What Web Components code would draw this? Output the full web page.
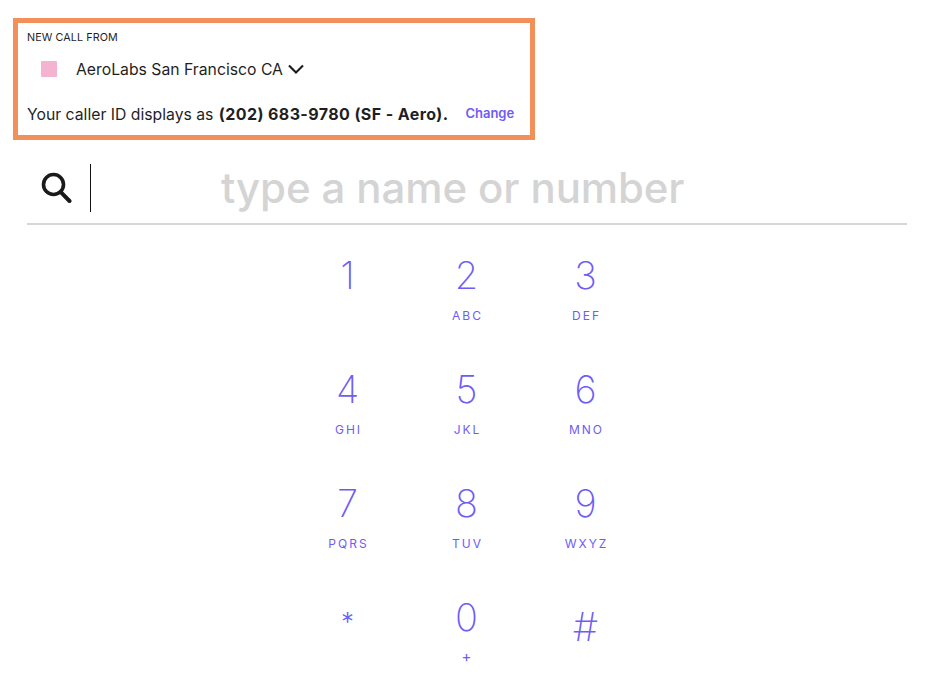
<!DOCTYPE html>
<html><head><meta charset="utf-8"><style>
html,body{margin:0;padding:0;background:#fff}
body{font-family:Inter,"Liberation Sans",sans-serif;width:939px;height:692px;overflow:hidden}
</style></head><body>
<dial-page>
<caller-box name="AeroLabs San Francisco CA" number="(202) 683-9780 (SF - Aero)."></caller-box>
<search-bar placeholder="type a name or number"></search-bar>
<dial-pad>
<dial-key d="1"></dial-key><dial-key d="2" l="ABC"></dial-key><dial-key d="3" l="DEF"></dial-key>
<dial-key d="4" l="GHI"></dial-key><dial-key d="5" l="JKL"></dial-key><dial-key d="6" l="MNO"></dial-key>
<dial-key d="7" l="PQRS"></dial-key><dial-key d="8" l="TUV"></dial-key><dial-key d="9" l="WXYZ"></dial-key>
<dial-key d="*" kind="star"></dial-key><dial-key d="0" l="+"></dial-key><dial-key d="#" kind="hash"></dial-key>
</dial-pad>
</dial-page>
<script>
function def(name,html,setup){customElements.define(name,class extends HTMLElement{connectedCallback(){if(this.shadowRoot)return;const r=this.attachShadow({mode:'open'});r.innerHTML=html(this);if(setup)setup(r,this);}});}
def('dial-page',()=>`<style>:host{display:flex;flex-direction:column;padding:18px 32px 0 13px;box-sizing:border-box;width:939px}</style><slot></slot>`);
def('caller-box',h=>`<style>
:host{display:flex;flex-direction:column;box-sizing:border-box;width:522px;height:122px;border:5px solid #f3905a;padding:8px 9px 0 9px;color:#1f1f1f}
.t{font-size:10.75px;line-height:13px;letter-spacing:.1px}
.row{display:flex;align-items:center;height:24px;margin-top:13px;padding-left:14px}
.sw{width:16px;height:16px;background:#f4b3d0;border-radius:1px;margin-right:19px}
.n{font-size:15.75px}
svg{margin-left:4px;display:block}
.id{display:flex;align-items:center;margin-top:23px;font-size:15.75px;line-height:20px;white-space:pre}
b{font-weight:700;font-size:16px;letter-spacing:.4px;margin-left:1px}
.c{margin-left:17px;font-size:13px;font-weight:600;color:#6e5cf6;position:relative;top:-1.5px}
</style><div class="t">NEW CALL FROM</div>
<div class="row"><span class="sw"></span><span class="n">${h.getAttribute('name')}</span>
<svg width="18" height="11" viewBox="0 0 18 11"><path d="M2 1.5 9 8.5l7-7" fill="none" stroke="#1a1a1a" stroke-width="2.1"/></svg></div>
<div class="id"><span>Your caller ID displays as <b>${h.getAttribute('number')}</b></span><span class="c">Change</span></div>`);
def('search-bar',h=>`<style>
:host{display:flex;align-items:center;box-sizing:border-box;width:880px;height:85px;margin:0 0 0 14px;border-bottom:2px solid #d6d6d6;padding:13px 0 0 14px}
svg{display:block;flex:none}
.caret{width:1px;height:48px;background:#111;margin-left:18px;flex:none}
.p{margin-left:130px;font-size:42px;font-weight:500;letter-spacing:-.12px;color:#d4d4d4;white-space:nowrap;line-height:48px}
</style><svg width="31" height="32" viewBox="0 0 31 32"><circle cx="12.5" cy="12.5" r="10" fill="none" stroke="#1a1a1a" stroke-width="3.6"/><path d="M19.8 20.2 28.5 29" stroke="#1a1a1a" stroke-width="4" stroke-linecap="round"/></svg><span class="caret"></span><span class="p">${h.getAttribute('placeholder')}</span>`);
def('dial-pad',()=>`<style>:host{display:grid;grid-template-columns:repeat(3,119px);grid-auto-rows:114px;justify-content:start;margin:0 0 0 275px;padding-top:28px}</style><slot></slot>`);
def('dial-key',h=>{const k=h.getAttribute('kind');const l=h.getAttribute('l')||'';
return `<style>
:host{display:flex;flex-direction:column;align-items:center;color:#6e5cf6}
.d{font-size:38px;font-weight:200;line-height:44px;height:44px}
.d.star{font-size:26px;padding-top:5px;font-weight:300}
.d.hash{margin-top:10px;font-size:40px}
.l{font-size:12px;letter-spacing:2px;line-height:14px;margin-top:12px;margin-right:-2px;font-weight:400}
.plus{font-size:15px;margin-top:11px}
</style><div class="d ${k||''}">${h.getAttribute('d')}</div>${l?`<div class="l ${l==='+'?'plus':''}">${l}</div>`:''}`});
</script></body></html>
